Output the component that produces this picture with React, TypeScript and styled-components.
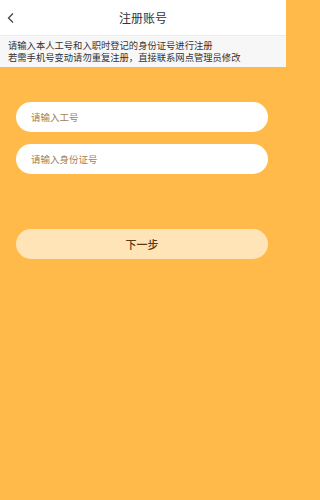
import styled, { createGlobalStyle } from "styled-components";

const GlobalStyle = createGlobalStyle`
  html, body {
    margin: 0;
    padding: 0;
    background: #ffba4a;
  }
  body {
    font-family: "Noto Sans CJK SC", "Noto Sans", sans-serif;
  }
  * {
    box-sizing: border-box;
  }
`;

const Page = styled.div`
  width: 286px;
  min-height: 500px;
  display: flex;
  flex-direction: column;
  background: #ffba4a;
`;

const TopBar = styled.header`
  height: 35px;
  background: #ffffff;
  display: grid;
  grid-template-columns: 30px 1fr 30px;
  align-items: center;
`;

const BackButton = styled.button`
  border: none;
  background: none;
  padding: 0 0 0 7px;
  height: 35px;
  display: flex;
  align-items: center;
  cursor: pointer;
`;

const Title = styled.h1`
  margin: 0;
  font-size: 12px;
  font-weight: 400;
  color: #333333;
  text-align: center;
`;

const Notice = styled.div`
  height: 32px;
  background: #f7f7f7;
  border-top: 1px solid #ececec;
  padding: 3px 8px 0;
  font-size: 9.3px;
  line-height: 12px;
  color: #333333;
`;

const Form = styled.form`
  display: flex;
  flex-direction: column;
  padding: 35px 18px 0 16px;
`;

const Field = styled.input`
  height: 30px;
  border: none;
  border-radius: 15px;
  background: #ffffff;
  padding: 0 15px;
  font-family: inherit;
  font-size: 9.5px;
  color: #333333;
  outline: none;
  & + & {
    margin-top: 12px;
  }
  &::placeholder {
    color: #a6804f;
  }
`;

const NextButton = styled.button`
  margin-top: 55px;
  height: 30px;
  border: none;
  border-radius: 15px;
  background: #ffe4b8;
  font-family: inherit;
  font-size: 11px;
  font-weight: 500;
  color: #5b3a12;
  cursor: pointer;
`;

function App() {
  return (
    <Page>
      <GlobalStyle />
      <TopBar>
        <BackButton type="button" aria-label="返回">
          <svg width="8" height="12" viewBox="0 0 8 12">
            <path d="M6 1.5 L1.5 6 L6 10.5" fill="none" stroke="#444" strokeWidth="1.3" />
          </svg>
        </BackButton>
        <Title>注册账号</Title>
        <span />
      </TopBar>
      <Notice>
        请输入本人工号和入职时登记的身份证号进行注册
        <br />
        若需手机号变动请勿重复注册，直接联系网点管理员修改
      </Notice>
      <Form onSubmit={e => e.preventDefault()}>
        <Field placeholder="请输入工号" />
        <Field placeholder="请输入身份证号" />
        <NextButton type="submit">下一步</NextButton>
      </Form>
    </Page>
  );
}

export default App;
